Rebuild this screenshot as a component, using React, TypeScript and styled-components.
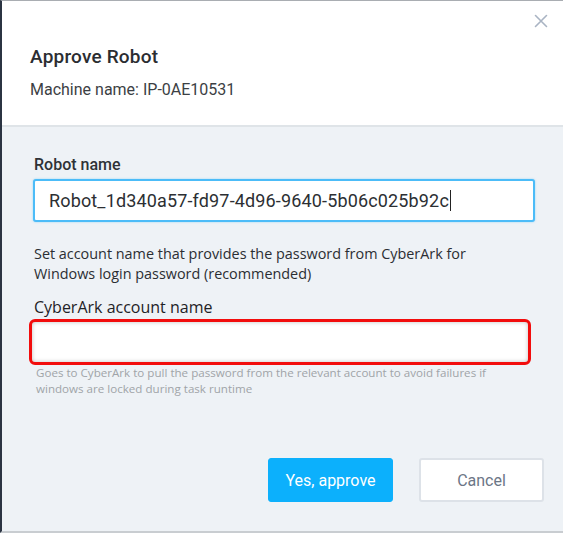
import React from "react";
import styled, { createGlobalStyle } from "styled-components";

const Global = createGlobalStyle`
  html, body { margin: 0; padding: 0; background: #ffffff; }
  #root { width: 563px; height: 533px; }
  * { box-sizing: border-box; }
`;

const Frame = styled.div`
  width: 563px;
  height: 533px;
  display: flex;
  flex-direction: column;
  border-left: 2px solid #2b3442;
  border-top: 1px solid #a9adb2;
  border-bottom: 2px solid #c9cdd1;
  background: #eef2f6;
  overflow: hidden;
`;

const Header = styled.header`
  position: relative;
  background: #ffffff;
  height: 126px;
  padding: 44px 28px 0 28px;
  border-bottom: 2px solid #dfe4e8;
  display: flex;
  flex-direction: column;
  gap: 11px;
`;

const CloseButton = styled.button`
  position: absolute;
  top: 12px;
  right: 14px;
  width: 16px;
  height: 16px;
  padding: 0;
  border: none;
  background: transparent;
  display: flex;
  align-items: center;
  justify-content: center;
  cursor: pointer;
`;

const Title = styled.h2`
  margin: 0;
  font-family: Roboto, "Liberation Sans", sans-serif;
  font-size: 19px;
  line-height: 24px;
  font-weight: 500;
  letter-spacing: 0.2px;
  color: #2b2d31;
`;

const Subtitle = styled.div`
  font-family: Roboto, "Liberation Sans", sans-serif;
  font-size: 16px;
  line-height: 20px;
  color: #3c3f44;
`;

const Body = styled.main`
  flex: 1;
  display: flex;
  flex-direction: column;
  padding: 28px 30px 29px 29px;
`;

const Label = styled.label<{ $variant?: "roboto" | "open" }>`
  display: block;
  margin-left: 3px;
  font-family: ${(p) =>
    p.$variant === "open"
      ? `"Open Sans", "Liberation Sans", sans-serif`
      : `Roboto, "Liberation Sans", sans-serif`};
  font-size: 16px;
  line-height: ${(p) => (p.$variant === "open" ? "22px" : "20px")};
  font-weight: ${(p) => (p.$variant === "open" ? 400 : 500)};
  color: ${(p) => (p.$variant === "open" ? "#1f2226" : "#2f3236")};
`;

const NameInput = styled.div`
  margin-top: 4px;
  margin-left: 2px;
  width: 502px;
  height: 43px;
  background: #ffffff;
  border: 2px solid #4cbcf8;
  border-radius: 3px;
  box-shadow: 0 0 2px rgba(76, 188, 248, 0.6);
  display: flex;
  align-items: center;
  padding-left: 14px;
  font-family: Roboto, "Liberation Sans", sans-serif;
  font-size: 18px;
  letter-spacing: 0.15px;
  color: #2c2f33;
`;

const Caret = styled.span`
  display: inline-block;
  width: 1px;
  height: 21px;
  background: #222;
  margin-left: 1px;
`;

const Description = styled.p`
  margin: 22px 0 0 3px;
  font-family: "Open Sans", "Liberation Sans", sans-serif;
  font-size: 14.4px;
  line-height: 20px;
  color: #2b2e33;
`;

const Spacer = styled.div<{ $h: number }>`
  height: ${(p) => p.$h}px;
  flex: none;
`;

const AccountInput = styled.div`
  margin-top: 1px;
  margin-left: -2px;
  width: 502px;
  height: 46px;
  background: #ffffff;
  border: 3px solid #f20d0d;
  border-radius: 6px;
  box-shadow: inset 0 0 4px rgba(0, 0, 0, 0.25);
`;

const Hint = styled.p`
  margin: 0 0 0 5px;
  font-family: "Open Sans", "Liberation Sans", sans-serif;
  font-size: 11.6px;
  line-height: 16px;
  color: #a0a4a8;
`;

const Actions = styled.div`
  margin-top: auto;
  display: flex;
  justify-content: flex-end;
  gap: 26px;
  margin-right: -11px;
`;

const Button = styled.button<{ $primary?: boolean }>`
  width: 125px;
  height: 44px;
  border-radius: 3px;
  font-family: Roboto, "Liberation Sans", sans-serif;
  font-size: 16px;
  cursor: pointer;
  background: ${(p) => (p.$primary ? "#0cb0fc" : "#ffffff")};
  color: ${(p) => (p.$primary ? "#ffffff" : "#6b7686")};
  border: ${(p) => (p.$primary ? "1px solid #0cb0fc" : "2px solid #dde2e8")};
`;

export default function App() {
  return (
    <>
      <Global />
      <Frame>
        <Header>
          <CloseButton aria-label="Close">
            <svg width="14" height="14" viewBox="0 0 14 14">
              <path
                d="M1.5 1.5 L12.5 12.5 M12.5 1.5 L1.5 12.5"
                stroke="#a9b4c3"
                strokeWidth="1.6"
                strokeLinecap="round"
              />
            </svg>
          </CloseButton>
          <Title>Approve Robot</Title>
          <Subtitle>Machine name: IP-0AE10531</Subtitle>
        </Header>
        <Body>
          <Label>Robot name</Label>
          <NameInput>
            Robot_1d340a57-fd97-4d96-9640-5b06c025b92c
            <Caret />
          </NameInput>
          <Description>
            Set account name that provides the password from CyberArk for
            <br />
            Windows login password (recommended)
          </Description>
          <Spacer $h={12} />
          <Label $variant="open">CyberArk account name</Label>
          <AccountInput />
          <Hint>
            Goes to CyberArk to pull the password from the relevant account to avoid failures if
            <br />
            windows are locked during task runtime
          </Hint>
          <Actions>
            <Button $primary>Yes, approve</Button>
            <Button>Cancel</Button>
          </Actions>
        </Body>
      </Frame>
    </>
  );
}
